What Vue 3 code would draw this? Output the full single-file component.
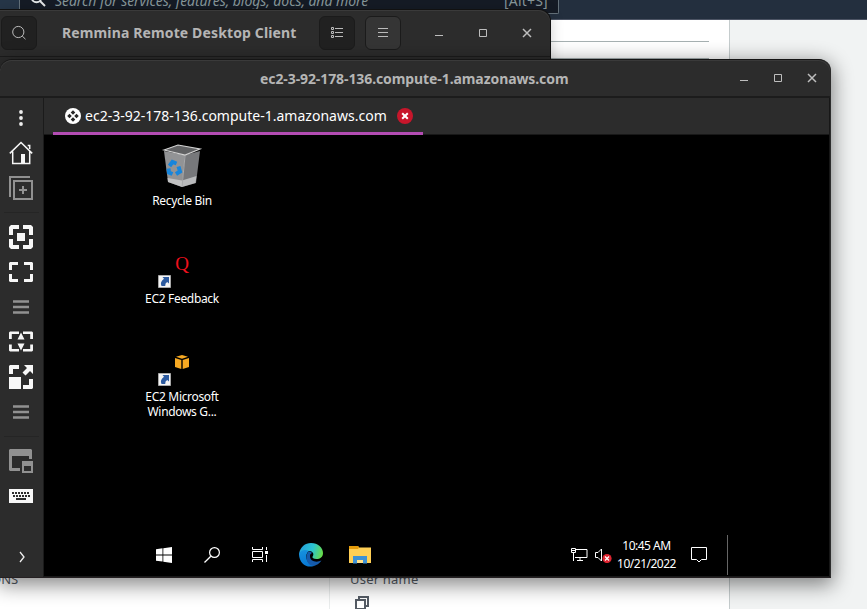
<script setup>
const tools = [
  ['menu', 'home', 'duplicate'],
  ['fullscreen', 'fit', 'lines', 'dynamic', 'scale', 'lines'],
  ['pip', 'keyboard'],
]
const host = 'ec2-3-92-178-136.compute-1.amazonaws.com'
</script>

<template>
  <div class="screen">
    <div class="console">
      <header class="aws-nav">
        <div class="aws-services"></div>
        <div class="aws-search">
          <svg class="aws-glass" width="16" height="16" viewBox="0 0 16 16"><circle cx="6.5" cy="6.5" r="4.8" /><path d="M10 10l5 5" /></svg>
          <span class="aws-hint">Search for services, features, blogs, docs, and more</span>
          <span class="aws-key">[Alt+S]</span>
        </div>
      </header>
      <div class="aws-body">
        <main class="aws-main">
          <div class="rules"><i></i><i></i></div>
          <div class="details">
            <div class="detail-left">ONS</div>
            <div class="detail-right">
              <span>User name</span>
              <svg width="14" height="14" viewBox="0 0 14 14"><path d="M4 4V1h9v9h-3M1 4h9v9H1z" /></svg>
            </div>
          </div>
        </main>
      </div>
    </div>

    <section class="window launcher">
      <div class="launcher-bar">
        <div class="btn pressed"><svg width="16" height="16" viewBox="0 0 16 16"><circle cx="7.3" cy="7" r="5.6" /><path d="M11.2 11l3.3 3.2" /></svg></div>
        <h1 class="launcher-title">Remmina Remote Desktop Client</h1>
        <div class="btn pressed list"><svg width="14" height="14" viewBox="0 0 14 14"><path d="M1.500 1.500h2v2h-2zM1.500 5.500h2v2h-2zM1.500 9.500h2v2h-2zM5 2.500h8M5 6.500h8M5 10.500h8" /></svg></div>
        <div class="btn raised"><svg width="14" height="14" viewBox="0 0 14 14"><path d="M2 2.500h10M2 6.500h10M2 10.500h10" /></svg></div>
        <div class="controls wide">
          <svg width="10" height="10" viewBox="0 0 10 10"><path d="M1 7.500h8" /></svg>
          <svg width="10" height="10" viewBox="0 0 10 10"><path d="M1.500 1.500h7v7h-7z" /></svg>
          <svg width="10" height="10" viewBox="0 0 10 10"><path class="cross" d="M1 1l8 8M9 1L1 9" /></svg>
        </div>
      </div>
    </section>

    <section class="window remote">
      <header class="titlebar">
        <h2>{{ host }}</h2>
        <div class="controls">
          <svg width="10" height="10" viewBox="0 0 10 10"><path d="M1 7.500h8" /></svg>
          <svg width="10" height="10" viewBox="0 0 10 10"><path d="M1.500 1.500h7v7h-7z" /></svg>
          <svg width="10" height="10" viewBox="0 0 10 10"><path class="cross" d="M1 1l8 8M9 1L1 9" /></svg>
        </div>
      </header>
      <div class="content">
        <aside class="sidebar">
          <div v-for="(group, g) in tools" :key="g" class="group">
            <div v-for="(tool, i) in group" :key="i" class="tool">
              <svg width="24" height="24" viewBox="0 0 24 24">
                <g v-if="tool === 'menu'" fill="#eee"><circle cx="12" cy="6" r="1.900" /><circle cx="12" cy="12" r="1.900" /><circle cx="12" cy="18" r="1.900" /></g>
                <g v-else-if="tool === 'home'">
                  <path d="M.8 12.400L12 1.500l11.200 10.900M3.700 10.500v12h17v-12M20.700 8V4.500h-2" fill="none" stroke="#f7f7f7" stroke-width="1.500" />
                  <path d="M12 13h4v10h-4z" fill="#f7f7f7" />
                </g>
                <path v-else-if="tool === 'duplicate'" d="M1 21V1h20M5 5h18v18H5zM10 14h8M14 10v8" fill="none" stroke="#919191" stroke-width="2" />
                <g v-else-if="tool === 'fullscreen'" fill="#f7f7f7">
                  <path d="M2 0h8v4H4v6H0V2zM14 0h8l2 2v8h-4V4h-6zM0 14h4v6h6v4H2l-2-2zM20 14h4v8l-2 2h-8v-4h6z" /><path d="M8 8h8v8H8z" />
                </g>
                <path v-else-if="tool === 'fit'" d="M1 2h8v3H3v5H0V3zM15 2h8l1 1v7h-3V5h-6zM0 14h3v5h6v3H1l-1-1zM21 14h3v7l-1 1h-8v-3h6z" fill="#f7f7f7" />
                <path v-else-if="tool === 'lines'" d="M4 6.500h16M4 12h16M4 17.500h16" stroke="#919191" stroke-width="2.400" />
                <path v-else-if="tool === 'dynamic'" d="M1 1.500h9V4H2.800v5H0V2.500zM14 1.500h9l1 1V9h-2.800V4H14zM0 14.500h2.800V19H10v2.500H1l-1-1zM21.200 14.500H24v6l-1 1h-9V19h7.200zM12 2.500l3.500 7h-7zM12 20.500l3.500-7h-7z" fill="#f7f7f7" />
                <path v-else-if="tool === 'scale'" d="M1 0h9v4H4v5H0V1zM0 12h12v12H0zM20 14h4v9l-1 1h-9v-4h6zM15 0h9v9l-3-3-4.500 4.500-3-3L18 3z" fill="#f7f7f7" />
                <g v-else-if="tool === 'pip'">
                  <path d="M1 0h21l1 1v9h-3V7H3v12h8v3H1l-1-1V1z" fill="#919191" /><path d="M13 12h11v12H13z" fill="#919191" /><path d="M15 17h7v5h-7z" fill="#2c2c2c" />
                </g>
                <g v-else>
                  <path d="M0 5h24v14H0z" fill="#f7f7f7" />
                  <path d="M3 9h18M4 12h17" stroke="#2c2c2c" stroke-width="2" stroke-dasharray="2 1" /><path d="M7 15h10" stroke="#2c2c2c" stroke-width="2" />
                </g>
              </svg>
            </div>
          </div>
          <div class="expand"><svg width="8" height="12" viewBox="0 0 8 12"><path d="M2 1l4 5-4 5" fill="none" stroke="#eee" stroke-width="1.300" /></svg></div>
        </aside>

        <div class="workspace">
          <nav class="tabs">
            <div class="tab">
              <svg class="tab-logo" width="16" height="16" viewBox="0 0 16 16">
                <circle cx="8" cy="8" r="8" fill="#fff" />
                <g fill="#292929"><path d="M8 2.200l2.300 2.300L8 6.800 5.700 4.500zM8 9.200l2.300 2.300L8 13.800l-2.300-2.300zM4.500 5.700L6.800 8l-2.300 2.300L2.200 8zM11.500 5.700L13.800 8l-2.300 2.300L9.200 8z" /></g>
              </svg>
              <span class="tab-label">{{ host }}</span>
              <svg class="tab-close" width="16" height="16" viewBox="0 0 16 16"><circle cx="8" cy="8" r="8" fill="#c7162b" /><path d="M5.200 5.200l5.600 5.600M10.800 5.200l-5.600 5.600" stroke="#fff" stroke-width="2" /></svg>
            </div>
          </nav>

          <div class="desktop">
            <div class="shortcuts">
              <div class="shortcut">
                <svg width="48" height="48" viewBox="0 0 48 48">
                  <path d="M6 8l21 4-3 32-14-5z" fill="#929395" /><path d="M27 12l15-4-4 32-14 4z" fill="#77787b" />
                  <path d="M6 7l14-5 22 4-15 6z" fill="#606163" stroke="#d3d3d3" stroke-width="1.200" />
                  <path d="M9.500 35l14.500 2.500L38.500 33l-1 7L24 44l-14-5z" fill="#cfd0d1" opacity=".75" />
                  <path d="M27 13l-3 31" stroke="#a9aaac" />
                  <g fill="none" stroke="#1685dc" stroke-width="4"><path d="M11.500 23l3-4 4 1.500" /><path d="M20.500 23.500l1.500 5-4 2.500" /><path d="M14.500 31l-3.500-1.500-.5-4" /></g>
                </svg>
                <span>Recycle Bin</span>
              </div>
              <div class="shortcut">
                <div class="glyph q">Q<svg class="arrow" width="13" height="13" viewBox="0 0 13 13"><path d="M.5.500h12v12H.500z" fill="#f4f4f4" stroke="#a8a8a8" /><path d="M4.500 2H11v6.500L9.200 7Q7 8 7.200 11H3.500Q1.500 7 6 3.800z" fill="#2c5a9f" /></svg></div>
                <span>EC2 Feedback</span>
              </div>
              <div class="shortcut">
                <div class="glyph">
                  <svg class="cube" width="14" height="14" viewBox="0 0 14 14"><path d="M0 3l6.300 2v9L0 12zM14 3L7.700 5v9l6.300-2zM7 0l6 1.700L7 3.800 1 1.700z" fill="#f7a922" /></svg>
                  <svg class="arrow" width="13" height="13" viewBox="0 0 13 13"><path d="M.5.500h12v12H.500z" fill="#f4f4f4" stroke="#a8a8a8" /><path d="M4.500 2H11v6.500L9.200 7Q7 8 7.200 11H3.500Q1.500 7 6 3.800z" fill="#2c5a9f" /></svg>
                </div>
                <span>EC2 Microsoft<br>Windows G...</span>
              </div>
            </div>

            <footer class="taskbar">
              <div class="task"><svg width="16" height="16" viewBox="0 0 16 16"><path d="M0 2.200L6.500 1.300v6.200H0zM7.300 1.200L16 0v7.500H7.300zM0 8.400h6.500v6.200L0 13.700zM7.300 8.400H16V16l-8.700-1.200z" fill="#fff" /></svg></div>
              <div class="task"><svg width="16" height="16" viewBox="0 0 16 16"><path d="M.5 15.500l6.300-6.300" stroke="#fff" stroke-width="1.300" /><circle cx="10.500" cy="5.500" r="4.900" fill="none" stroke="#fff" stroke-width="1.200" /></svg></div>
              <div class="task"><svg width="16" height="16" viewBox="0 0 16 16"><path d="M.5 0v2.500h10V0M.5 4.500h10v6H.5zM.5 15v-2.500h10V15M14.500 0v3M14.500 8v7" fill="none" stroke="#fff" /><path d="M13 4h3v3h-3z" fill="#fff" /></svg></div>
              <div class="task edge">
                <svg width="24" height="24" viewBox="0 0 24 24">
                  <defs>
                    <linearGradient id="top" x1="0" x2="1" y1=".3" y2=".5"><stop offset="0" stop-color="#249edb" /><stop offset=".55" stop-color="#2bc4d2" /><stop offset="1" stop-color="#67dc4a" /></linearGradient>
                    <linearGradient id="side" x1="0" x2=".3" y1="0" y2="1"><stop offset="0" stop-color="#1793df" /><stop offset="1" stop-color="#0878d4" /></linearGradient>
                  </defs>
                  <path d="M.2 10C1.500 4 6 0 12 0c7 0 12 4.700 12 10 0 4-3 6-6.500 6-3 0-4.500-1.200-4-2.200 2-2.500.5-5.800-3.500-5.800C5 8 1 9 .2 14z" fill="url(#top)" />
                  <path d="M.1 11C1.500 7 6 6 10 8c-2.500 2-3.500 5-2 9s5.500 6 9 5C9 26.500 0 21 .1 11z" fill="url(#side)" />
                  <path d="M9.500 8.500C6.500 12 6.500 18 11 22c4.500 2 9-.5 11.500-4.500-5 2.500-12 1-11.500-5 .2-1.500 1-2 2-2.500-.7-1-2-1.500-3.500-1.500z" fill="#155aab" />
                </svg>
              </div>
              <div class="task folder">
                <svg width="22" height="18" viewBox="0 0 22 18"><path d="M0 0h9l1 1.500h12V17H0z" fill="#ffcf55" /><path d="M0 0h9l1 1.500L9 3H0z" fill="#e59c0b" /><path d="M4 10h14v7.500h-4V14H8v3.500H4z" fill="#3d91d5" /><path d="M8 14h6v3H8z" fill="#ffe08a" /></svg>
              </div>
              <div class="tray">
                <svg width="17" height="14" viewBox="0 0 17 14"><path d="M5 1.500h11v8H4M2.500 5v8M6 12.500h6M9 9.500v3M.5.500h4v4h-4z" fill="none" stroke="#fff" /><path d="M1 2.500h3" stroke="#fff" /></svg>
                <svg class="sound" width="17" height="16" viewBox="0 0 17 16"><path d="M.5 5.500H3L6.500 2v12L3 10.500H.5z" fill="none" stroke="#fff" /><circle cx="12" cy="11.500" r="4.600" fill="#de2531" /><path d="M10 9.500l4 4M14 9.500l-4 4" stroke="#fff" stroke-width="1.200" /></svg>
                <div class="clock">10:45 AM<br>10/21/2022</div>
                <svg class="note" width="16" height="16" viewBox="0 0 16 16"><path d="M.5.500h15v12h-5L8 15l-2.500-2.500h-5z" fill="none" stroke="#fff" /></svg>
                <i class="peek"></i>
              </div>
            </footer>
          </div>
        </div>
      </div>
    </section>
  </div>
</template>

<style scoped>
.screen { position: relative; width: 867px; height: 609px; overflow: hidden; font-family: "Noto Sans", sans-serif; }
.screen * { box-sizing: border-box; }
svg { display: block; flex: none; }
h1, h2 { margin: 0; }

.console { display: flex; flex-direction: column; height: 609px; background: #f1f3f3; }
.aws-nav { display: flex; height: 20px; background: #232f3e; border-bottom: 1px solid #4c5464; }
.aws-services { width: 19px; background: #263648; }
.aws-search { display: flex; width: 540px; height: 14px; padding-left: 12px; background: #151b25; border: 1px solid #64717a; border-top: 0; border-radius: 0 0 2px 2px; }
.aws-glass { margin: -9px 0 0 -2px; fill: none; stroke: #e5e8e9; stroke-width: 2; }
.aws-hint, .aws-key { margin-top: -10px; height: 22px; line-height: 22px; font-size: 14px; color: #87979a; white-space: nowrap; }
.aws-hint { margin-left: 9px; font-style: italic; letter-spacing: -.07px; width: 449px; }
.aws-key { letter-spacing: .2px; }
.aws-body { flex: 1; }
.aws-main { display: flex; flex-direction: column; justify-content: space-between; width: 730px; height: 589px; background: #fff; border-right: 1px solid #c5cccd; }
.rules { width: 709px; padding-top: 21px; }
.rules i { display: block; height: 1px; margin-bottom: 16px; background: #a6b0b1; }
.details { display: flex; height: 40px; font-size: 13px; line-height: 18px; color: #545b64; }
.detail-left { width: 330px; border-right: 1px solid #eaeded; text-indent: -9px; padding-top: 1px; }
.detail-right { padding: 1px 0 0 20px; letter-spacing: .2px; }
.detail-right svg { margin: 8px 0 0 5px; fill: none; stroke: #545b64; stroke-width: 2; }

.window { position: absolute; left: 0; background: #2c2c2c; }
.launcher { top: 9px; width: 551px; height: 60px; border: 1px solid #111; border-left: 0; border-radius: 0 12px 0 0; box-shadow: 0 2px 14px #0003; }
.launcher-bar { display: flex; align-items: center; height: 47px; padding-left: 1px; border-bottom: 1px solid #1c1c1c; border-radius: 0 12px 0 0; box-shadow: inset 0 1px #3a3a3a; }
.btn { display: flex; align-items: center; justify-content: center; width: 36px; height: 34px; border: 1px solid #1b1b1b; border-radius: 6px; }
.btn svg { fill: none; stroke: #bbb; stroke-width: 1; }
.pressed { background: #212121; }
.raised { margin-left: 10px; background: #353535; }
.launcher-title { width: 257px; margin-left: 25px; font-size: 14px; font-weight: 700; line-height: 20px; letter-spacing: .13px; color: #b5b5b5; white-space: nowrap; }
.controls { display: flex; gap: 24px; }
.controls svg { fill: none; stroke: #bebebe; stroke-width: 1; }
.controls .cross { stroke-width: 1.500; }
.wide { gap: 34px; margin-left: 33px; }

.remote { top: 59px; width: 831px; height: 519px; padding-right: 1px; border-radius: 12px 12px 0 0; border-bottom: 1px solid #252022; border-top: 1px solid #151515; box-shadow: 0 5px 20px 2px #0007; }
.titlebar { display: flex; align-items: center; height: 38px; padding-left: 260px; border-bottom: 2px solid #1c1c1c; border-radius: 12px 12px 0 0; box-shadow: inset 0 1px #3a3a3a; }
.titlebar h2 { width: 479px; padding-top: 1px; font-size: 14px; line-height: 20px; font-weight: 700; letter-spacing: -.09px; color: #b5b5b5; white-space: nowrap; }
.content { display: flex; height: 479px; }
.sidebar { display: flex; flex-direction: column; width: 44px; padding: 2px 0 0; border-right: 1px solid #1b1b1b; }
.group { padding: 0 4px; }
.group + .group { margin: 7px 4px 0; padding: 6px 0 0; border-top: 1px solid #252525; }
.tool { display: flex; justify-content: center; height: 35px; padding: 6px 2px 0 1px; }
.expand { display: flex; justify-content: center; margin-top: auto; padding: 0 1px 14px 1px; }
.workspace { flex: 1; border-right: 1px solid #171717; border-bottom: 1px solid #191919; display: flex; flex-direction: column; }
.tabs { height: 37px; border-bottom: 1px solid #181818; }
.tab { display: flex; align-items: center; width: 370px; height: 37px; margin-left: 9px; padding: 2px 0 0 12px; border-bottom: 3px solid #b34cb3; }
.tab-label { width: 312px; margin-left: 4px; font-size: 14px; line-height: 20px; letter-spacing: .01px; color: #fff; white-space: nowrap; }
.desktop { display: flex; flex-direction: column; justify-content: space-between; flex: 1; background: #000; }
.shortcuts { width: 100px; margin-left: 88px; padding-top: 8px; }
.shortcut { display: flex; flex-direction: column; align-items: center; height: 98px; font-size: 12px; line-height: 15px; letter-spacing: -.32px; color: #fff; text-align: center; white-space: nowrap; }
.shortcut > span { margin-top: 2px; }
.glyph { position: relative; display: flex; align-items: center; justify-content: center; width: 48px; height: 48px; padding-bottom: 2px; }
.q { font: 19px/20px "Liberation Serif", serif; color: #f0101d; padding-bottom: 3px; }
.arrow { position: absolute; left: 0; bottom: 1px; }
.taskbar { display: flex; align-items: center; height: 44px; padding: 2px 0 0 96px; }
.task { display: flex; align-items: center; justify-content: center; width: 48px; height: 42px; }
.edge { width: 54px; }
.folder { width: 44px; }
.tray { display: flex; align-items: center; margin-left: 189px; }
.sound { margin-left: 7px; }
.clock { width: 69px; margin-left: 0; font-size: 12px; line-height: 18px; letter-spacing: -.5px; color: #fff; text-align: center; }
.note { margin-left: 10px; }
.peek { width: 1px; height: 40px; margin-left: 20px; background: #666; }
</style>
